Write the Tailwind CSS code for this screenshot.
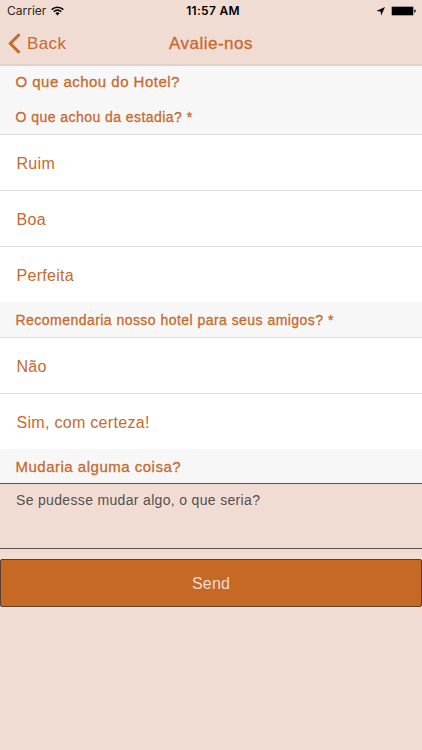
<!DOCTYPE html>
<html lang="pt">
<head>
  <meta charset="UTF-8" />
  <meta name="viewport" content="width=device-width, initial-scale=1.0" />
  <title>Avalie-nos</title>
  <script src="https://cdn.jsdelivr.net/npm/@tailwindcss/browser@4"></script>
</head>
<body class="h-[750px] overflow-hidden bg-[#f1dcd3] text-[#c66a2e] font-['Liberation_Sans',Arial,sans-serif]">

  <!-- Status bar -->
  <div class="grid grid-cols-3 items-center h-[22px] pl-[7px] pr-[6px] text-black font-[Inter,sans-serif] text-[12px]">
    <div class="flex items-center gap-[5px]">
      <span class="text-[#2b2523]">Carrier</span>
      <svg class="w-[13px] h-[10px]" viewBox="0 0 13 10" fill="none" stroke="#000" stroke-width="1.6">
        <path d="M0.7 3.6a8.2 8.2 0 0 1 11.6 0" />
        <path d="M2.8 5.7a5.2 5.2 0 0 1 7.4 0" />
        <path d="M4.4 7.2a3 3 0 0 1 4.2 0L6.5 9.4z" fill="#000" stroke="none" />
      </svg>
    </div>
    <span class="pl-[3px] text-center font-semibold tracking-[0.3px] whitespace-nowrap">11:57 AM</span>
    <div class="flex items-center justify-end gap-[6px]">
      <svg class="w-[9px] h-[9px]" viewBox="0 0 9 9"><path d="M9 0L5.2 8.6L4.6 4.4L0.3 3.9z" /></svg>
      <svg class="w-[25px] h-[10px]" viewBox="0 0 25 10">
        <rect x="0.3" y="0.3" width="22.4" height="9.4" rx="1.2" fill="#8b817d" />
        <rect x="1" y="1" width="21" height="8" rx="0.6" />
        <path d="M23.4 3.3c1.8 0.4 1.8 3 0 3.4z" />
      </svg>
    </div>
  </div>

  <!-- Nav bar -->
  <header class="grid grid-cols-3 items-center h-[44px] border-b-2 border-[#ded0cc] px-[8px]">
    <a href="#" class="flex items-center gap-[6px] pt-[1px] text-[17px] tracking-[0.4px]">
      <svg class="w-[13px] h-[21px]" viewBox="0 0 13 21" fill="none" stroke="#c66a2e" stroke-width="3">
        <path d="M11.5 1.3L2.3 10.5L11.5 19.7" />
      </svg>
      Back
    </a>
    <h1 class="pt-[1px] text-center text-[17px] tracking-[0.5px] [-webkit-text-stroke:0.3px]">Avalie-nos</h1>
  </header>

  <!-- Form -->
  <main>
    <div class="h-[69px] bg-[#f7f7f7] border-b border-[#dedede] pl-[15.5px] [-webkit-text-stroke:0.3px]">
      <h2 class="h-[34px] leading-[32px] text-[15px] tracking-[0.48px]">O que achou do Hotel?</h2>
      <h3 class="h-[34px] leading-[34px] text-[14px] tracking-[0.45px]">O que achou da estadia? *</h3>
    </div>
    <ul class="bg-white text-[16px] tracking-[0.3px]">
      <li class="h-[56px] leading-[57px] pl-[16.5px] border-b border-[#dedede]">Ruim</li>
      <li class="h-[56px] leading-[57px] pl-[16.5px] border-b border-[#dedede]">Boa</li>
      <li class="h-[55px] leading-[57px] pl-[16.5px]">Perfeita</li>
    </ul>
    <h3 class="h-[36px] leading-[37px] pl-[15.5px] bg-[#f7f7f7] border-b border-[#dedede] text-[14px] tracking-[0.46px] [-webkit-text-stroke:0.3px]">Recomendaria nosso hotel para seus amigos? *</h3>
    <ul class="bg-white text-[16px] tracking-[0.3px]">
      <li class="h-[56px] leading-[58px] pl-[16.5px] border-b border-[#dedede]">Não</li>
      <li class="h-[55px] leading-[58px] pl-[16.5px]">Sim, com certeza!</li>
    </ul>
    <h2 class="h-[34px] leading-[35px] pl-[15.5px] bg-[#f7f7f7] text-[15px] tracking-[0.5px] [-webkit-text-stroke:0.3px]">Mudaria alguma coisa?</h2>
    <div class="h-[66px] border-y border-[#5b5250] pl-[16px] pt-[6px] text-[14px] leading-[20px] tracking-[0.33px] text-[#55504d]">Se pudesse mudar algo, o que seria?</div>
    <button class="block w-full h-[48px] mt-[10px] pt-[2px] rounded-[2px] border border-[#5b4032] bg-[#c66925] text-[#f1dcd3] text-[16px] tracking-[0.2px]">Send</button>
  </main>

</body>
</html>
